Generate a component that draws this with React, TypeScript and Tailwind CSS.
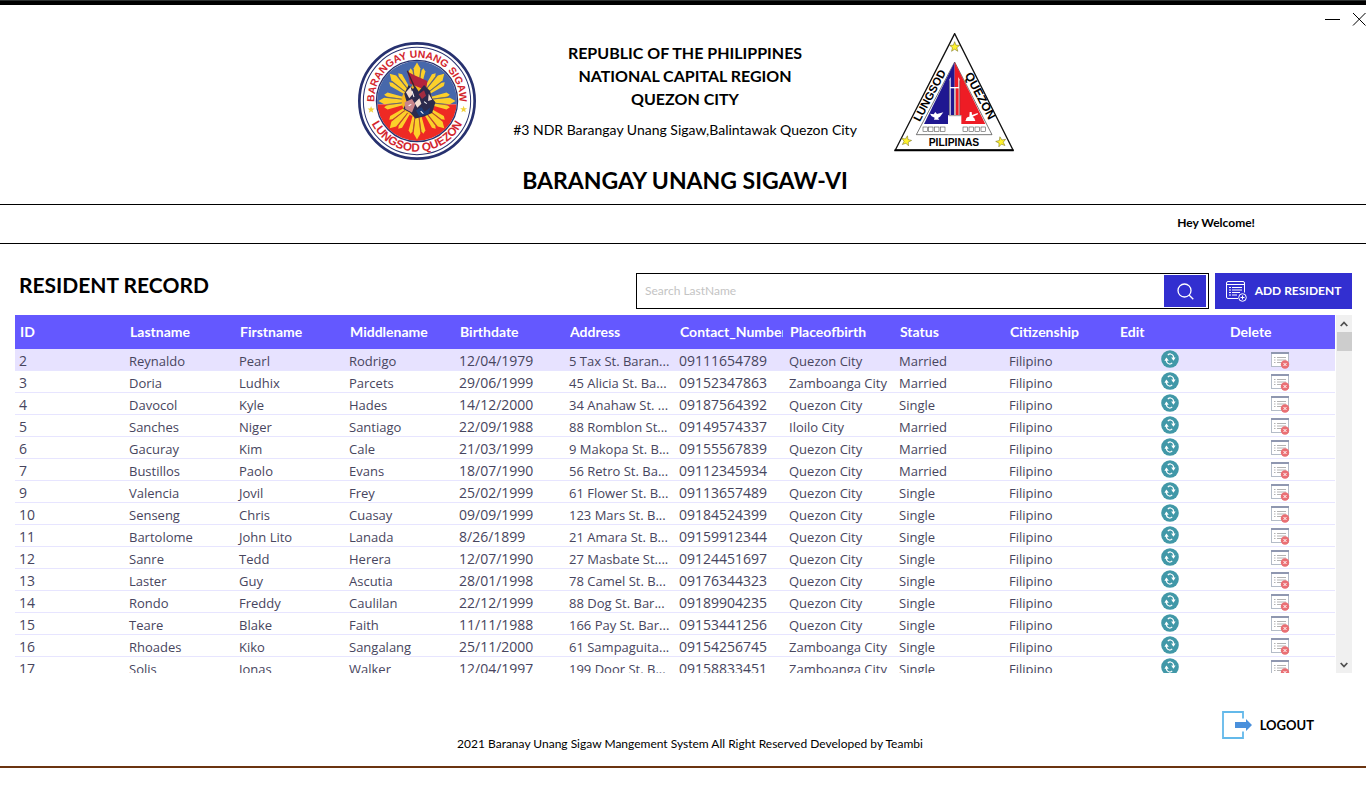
import React from "react";

type Resident = [string, string, string, string, string, string, string, string, string];

const headings = [
  "ID",
  "Lastname",
  "Firstname",
  "Middlename",
  "Birthdate",
  "Address",
  "Contact_Number",
  "Placeofbirth",
  "Status",
  "Citizenship",
  "Edit",
  "Delete",
];

const numericColumns = [0, 4, 6];

const residents: Resident[] = [
  ["2", "Reynaldo", "Pearl", "Rodrigo", "12/04/1979", "5 Tax St. Baran...", "09111654789", "Quezon City", "Married"],
  ["3", "Doria", "Ludhix", "Parcets", "29/06/1999", "45 Alicia St. Ba...", "09152347863", "Zamboanga City", "Married"],
  ["4", "Davocol", "Kyle", "Hades", "14/12/2000", "34 Anahaw St. ...", "09187564392", "Quezon City", "Single"],
  ["5", "Sanches", "Niger", "Santiago", "22/09/1988", "88 Romblon St...", "09149574337", "Iloilo City", "Married"],
  ["6", "Gacuray", "Kim", "Cale", "21/03/1999", "9 Makopa St. B...", "09155567839", "Quezon City", "Married"],
  ["7", "Bustillos", "Paolo", "Evans", "18/07/1990", "56 Retro St. Ba...", "09112345934", "Quezon City", "Married"],
  ["9", "Valencia", "Jovil", "Frey", "25/02/1999", "61 Flower St. B...", "09113657489", "Quezon City", "Single"],
  ["10", "Senseng", "Chris", "Cuasay", "09/09/1999", "123 Mars St. B...", "09184524399", "Quezon City", "Single"],
  ["11", "Bartolome", "John Lito", "Lanada", "8/26/1899", "21 Amara St. B...", "09159912344", "Quezon City", "Single"],
  ["12", "Sanre", "Tedd", "Herera", "12/07/1990", "27 Masbate St....", "09124451697", "Quezon City", "Single"],
  ["13", "Laster", "Guy", "Ascutia", "28/01/1998", "78 Camel St. B...", "09176344323", "Quezon City", "Single"],
  ["14", "Rondo", "Freddy", "Caulilan", "22/12/1999", "88 Dog St. Bar...", "09189904235", "Quezon City", "Single"],
  ["15", "Teare", "Blake", "Faith", "11/11/1988", "166 Pay St. Bar...", "09153441256", "Quezon City", "Single"],
  ["16", "Rhoades", "Kiko", "Sangalang", "25/11/2000", "61 Sampaguita...", "09154256745", "Zamboanga City", "Single"],
  ["17", "Solis", "Jonas", "Walker", "12/04/1997", "199 Door St. B...", "09158833451", "Zamboanga City", "Single"],
];

function Star({ x, y, r, fill, stroke, turn = 0 }: { x: number; y: number; r: number; fill: string; stroke?: string; turn?: number }) {
  const points = Array.from({ length: 10 }, (_, i) => {
    const a = ((-90 + turn + i * 36) * Math.PI) / 180;
    const d = i % 2 ? r * 0.42 : r;
    return `${(x + d * Math.cos(a)).toFixed(1)},${(y + d * Math.sin(a)).toFixed(1)}`;
  }).join(" ");
  return <polygon points={points} fill={fill} stroke={stroke} strokeWidth="1.5" />;
}

function BarangaySeal() {
  return (
    <svg viewBox="25 36 352 352" className="mt-[9px] h-[118px] w-[118px] shrink-0" role="img" aria-label="Barangay Unang Sigaw seal">
      <defs>
        <path id="sealTop" d="M76 232 A127 127 0 1 1 326 232" />
        <path id="sealBottom" d="M50 212 A151 151 0 0 0 352 212" />
        <clipPath id="sealDisc">
          <circle cx="201" cy="212" r="119" />
        </clipPath>
      </defs>
      <circle cx="201" cy="212" r="172" fill="#fff" stroke="#27316f" strokeWidth="8" />
      <circle cx="201" cy="212" r="160" fill="#fff" stroke="#27316f" strokeWidth="3" />
      <g clipPath="url(#sealDisc)">
        <rect x="80" y="90" width="242" height="132" fill="#4768ab" />
        <rect x="80" y="222" width="242" height="112" fill="#ee2a24" />
        {[0, 45, 90, 135, 180, 225, 270, 315].map((a) => (
          <g key={a} transform={`rotate(${a} 201 212)`} fill="#fcd02a">
            <polygon points="201,212 191,114 201,97 211,114" />
            <polygon points="200,212 176,124 182,114 188,122" />
            <polygon points="202,212 226,124 220,114 214,122" />
            <path d="M189 120 L199 190 M213 120 L203 190" stroke="#8a6a3a" strokeWidth="2" />
          </g>
        ))}
        <circle cx="201" cy="212" r="46" fill="#f7b81f" />
      </g>
      <circle cx="201" cy="212" r="121" fill="none" stroke="#27316f" strokeWidth="4" />
      <path d="M173 124 L190 134 L232 152 L228 180 L206 171 L180 160 Z" fill="#b5243c" />
      <path d="M172 122 L202 190" stroke="#3b2330" strokeWidth="4" />
      <path d="M163 190 L176 164 L189 176 L196 168 L206 184 L222 164 L240 182 L246 204 L256 216 L246 248 L222 258 L196 264 L180 246 L160 236 L170 214 Z" fill="#2c2b4d" />
      <path d="M168 186 L182 170 L188 192 L178 204 Z M194 218 L208 204 L214 220 L202 232 Z M236 190 L246 208 L234 212 Z" fill="#f3ddd0" />
      <path d="M164 216 L186 206 L196 222 L186 246 L166 236 Z" fill="#c8858a" />
      <path d="M206 192 L222 180 L228 196 L216 206 Z" fill="#a32c40" />
      <path d="M198 240 L214 230 L224 244 L240 232 L236 250 L208 258 Z" fill="#1b3c78" />
      <path d="M176 226 L184 222 M222 214 L230 220 M212 242 L220 250 M186 182 L192 200" stroke="#fff" strokeWidth="3" />
      <g fill="#d3262e" fontFamily="Liberation Sans, sans-serif" fontWeight="700" textAnchor="middle">
        <text fontSize="31">
          <textPath href="#sealTop" startOffset="50%">BARANGAY UNANG SIGAW</textPath>
        </text>
        <text fontSize="35">
          <textPath href="#sealBottom" startOffset="50%">LUNGSOD QUEZON</textPath>
        </text>
      </g>
      <Star x={64} y={238} r={11} fill="#f2d23c" />
      <Star x={340} y={237} r={11} fill="#f2d23c" />
    </svg>
  );
}

function CitySeal() {
  return (
    <svg viewBox="28 26 360 360" className="h-[120px] w-[120px] shrink-0" role="img" aria-label="Lungsod Quezon Pilipinas seal">
      <polygon points="210,28 32,377 385,377" fill="#fff" stroke="#111" strokeWidth="4" />
      <path d="M29 378 H387" stroke="#000" strokeWidth="5" />
      <polygon points="210,113 95,331 322,331" fill="#fff" stroke="#333" strokeWidth="2" />
      <polygon points="210,113 118,299 210,299" fill="#1f1791" />
      <polygon points="210,113 302,299 210,299" fill="#ee1c25" />
      <path d="M190 330 V272 H194 V166 L198 158 V188 H221 V158 L225 166 V272 H230 V330 Z" fill="#fff" />
      <path d="M198 192 H208 V272 H198 Z" fill="#1f1791" />
      <path d="M213 192 H222 V272 H213 Z" fill="#ee1c25" />
      <path d="M194 168 V272 M225 168 V272 M210.5 192 V272 M191 274 H230" stroke="#333" strokeWidth="1.5" fill="none" />
      <path d="M136 268 L147 270 L152 263 L157 269 L176 264 L166 277 L160 281 L164 286 H148 L150 280 L141 276 Z" fill="#fff" />
      <path d="M244 286 Q244 278 254 277 L255 263 H261 L262 272 L279 266 L280 270 L264 277 Q270 280 272 290 H242 Z" fill="#fff" />
      <g fill="#fff" stroke="#333" strokeWidth="1.5">
        {[115, 132, 150, 168, 235, 253, 271, 289].map((x) => (
          <rect key={x} x={x} y="308" width="13" height="13" />
        ))}
      </g>
      <g fill="#000" fontFamily="Liberation Sans, sans-serif" fontWeight="700" textAnchor="middle">
        <text fontSize="34" transform="translate(145 219) rotate(-62)">LUNGSOD</text>
        <text fontSize="36" transform="translate(276 220) rotate(62)">QUEZON</text>
        <text fontSize="31" x="208" y="366">PILIPINAS</text>
      </g>
      <Star x={210} y={68} r={16} fill="#fff22d" stroke="#6b6415" />
      <Star x={65} y={350} r={16} fill="#fff22d" stroke="#6b6415" turn={12} />
      <Star x={349} y={353} r={16} fill="#fff22d" stroke="#6b6415" turn={-12} />
    </svg>
  );
}

function EditIcon() {
  return (
    <svg viewBox="0 0 18 18" className="h-[18px] w-[18px]" aria-hidden="true">
      <circle cx="9" cy="9" r="8.8" fill="#4198a8" />
      <path d="M8.500 14 C6 13.500 5 11.500 5.400 8.600 M9.500 4 C12 4.500 13 6.500 12.600 9.400 M6.800 5.200 Q8 3.800 9.800 4 M11.200 12.800 Q10 14.200 8.200 14" fill="none" stroke="#fff" strokeWidth="1.2" />
      <path d="M3.400 10.800 L5.400 7.600 L7.800 10.800 Z M14.600 7.600 L12.400 10.800 L10.200 7.600 Z" fill="#fff" />
    </svg>
  );
}

function DeleteIcon() {
  return (
    <svg viewBox="0 0 19 17" className="h-[17px] w-[19px]" aria-hidden="true">
      <rect x="0.5" y="0.5" width="17" height="14" fill="#fff" stroke="#b4bcc8" />
      <path d="M0 1 H18" stroke="#8f97b0" strokeWidth="2" />
      <path d="M3 5.5 H4.5 M3 8 H4.5 M3 10.5 H4.5 M6 5.5 H15 M6 8 H15 M6 10.5 H11" stroke="#b3b3b3" />
      <circle cx="14" cy="12.5" r="4.2" fill="#ea6f74" />
      <path d="M12.5 11 L15.5 14 M15.5 11 L12.5 14" stroke="#fff" />
    </svg>
  );
}

function AddIcon() {
  return (
    <svg viewBox="0 0 21 21" className="h-[21px] w-[21px]" fill="none" stroke="#fff" aria-hidden="true">
      <path d="M12 17.5 H2 Q0.500 17.5 0.500 16 V2 Q0.500 0.500 2 0.500 H17 Q18.500 0.500 18.500 2 V11.500 M0.500 3.500 H18.500" />
      <path d="M3 6.500 H5 M6 6.500 H16 M3 9 H5 M6 9 H16 M3 11.500 H5 M6 11.500 H14 M3 14 H5 M6 14 H11" />
      <circle cx="16.500" cy="16.500" r="3.800" />
      <path d="M16.500 14.500 V18.500 M14.500 16.500 H18.500" />
    </svg>
  );
}

export default function App() {
  return (
    <div className="min-h-screen bg-white font-['Lato',sans-serif] text-black">
      <div className="h-[5px] border-t border-[#2c302f] bg-black" />

      <header className="overflow-hidden border-b border-black pb-2">
        <div className="flex h-7 justify-end gap-3">
          <button type="button" aria-label="Minimize" className="flex items-center">
            <svg viewBox="0 0 16 16" className="h-4 w-4" aria-hidden="true">
              <path d="M1 8.500 H16" stroke="#000" />
            </svg>
          </button>
          <button type="button" aria-label="Close" className="flex w-[14px] items-center overflow-hidden">
            <svg viewBox="0 0 14 14" className="h-[14px] w-[14px] shrink-0" aria-hidden="true">
              <path d="M1 1 L13.500 13.500 M13.500 1 L1 13.500" stroke="#000" />
            </svg>
          </button>
        </div>

        <div className="flex items-start justify-center pl-[6px]">
          <BarangaySeal />
          <div className="w-[418px] pt-2 text-center">
            <p className="text-base leading-[23px] font-bold">
              REPUBLIC OF THE PHILIPPINES
              <br />
              NATIONAL CAPITAL REGION
              <br />
              QUEZON CITY
            </p>
            <p className="mt-[10px] text-sm leading-5">#3 NDR Barangay Unang Sigaw,Balintawak Quezon City</p>
            <h1 className="mt-6 text-[23px] leading-8 font-bold">BARANGAY UNANG SIGAW-VI</h1>
          </div>
          <CitySeal />
        </div>
      </header>

      <div className="flex h-[39px] items-center justify-end border-b border-black pr-[111px] pb-[2px]">
        <p className="text-xs font-bold">Hey Welcome!</p>
      </div>

      <main className="pt-[29px] pr-[14px] pl-[15px]">
        <div className="flex h-9 items-center gap-[6px]">
          <h2 className="flex-1 pb-3 pl-1 text-[21px] leading-6 font-bold">RESIDENT RECORD</h2>
          <form className="flex h-9 w-3/7 items-center border border-black pr-[2px]" onSubmit={(e) => e.preventDefault()}>
            <input
              type="text"
              aria-label="Search LastName"
              placeholder="Search LastName"
              className="h-full min-w-0 flex-1 px-2 pb-[2px] text-xs outline-none placeholder:text-[#c4c4c4]"
            />
            <button type="submit" aria-label="Search" className="flex h-8 w-[42px] items-center justify-center bg-[#322fd0]">
              <svg viewBox="0 0 17 17" className="h-[17px] w-[17px]" fill="none" stroke="#fff" strokeWidth="1.3" aria-hidden="true">
                <circle cx="7.500" cy="7.500" r="6.500" />
                <path d="M12 12 L16.300 16.300" />
              </svg>
            </button>
          </form>
          <button type="button" className="flex h-9 w-[137px] items-center justify-center gap-2 bg-[#322fd0] text-xs font-bold whitespace-nowrap text-white">
            <AddIcon />
            ADD RESIDENT
          </button>
        </div>

        <div className="mt-[6px] flex h-[358px] gap-[1px]">
          <div className="min-w-0 flex-1 overflow-hidden">
            <table className="w-full table-fixed border-separate border-spacing-0 text-left">
              <thead>
                <tr className="h-[34px] bg-[#6458ff] text-sm text-white">
                  {headings.map((h) => (
                    <th key={h} scope="col" className="p-0 pr-[2px] pl-[5px] font-bold whitespace-nowrap">
                      <div className="overflow-hidden">{h}</div>
                    </th>
                  ))}
                </tr>
              </thead>
              <tbody className="font-['Open_Sans',sans-serif] text-[#47455e]">
                {residents.map((r) => (
                  <tr key={r[0]} className="h-[22px] first:bg-[#e7e2ff]">
                    {[...r, "Filipino"].map((value, i) => (
                      <td
                        key={i}
                        className={`overflow-hidden border-b border-[#e7e5ff] p-0 pt-[3px] pl-1 whitespace-nowrap ${
                          numericColumns.includes(i) ? "text-sm leading-[18px]" : "text-[13px] leading-[18px]"
                        }`}
                      >
                        {value}
                      </td>
                    ))}
                    <td className="border-b border-[#e7e5ff] p-0 pt-px align-top">
                      <button type="button" aria-label={`Edit ${r[1]}`} className="mx-auto block">
                        <EditIcon />
                      </button>
                    </td>
                    <td className="border-b border-[#e7e5ff] p-0 pt-[3px] align-top">
                      <button type="button" aria-label={`Delete ${r[1]}`} className="mx-auto block">
                        <DeleteIcon />
                      </button>
                    </td>
                  </tr>
                ))}
              </tbody>
            </table>
          </div>
          <div className="flex w-4 shrink-0 flex-col items-center bg-[#f0f0f0]">
            <button type="button" aria-label="Scroll up" className="flex h-[17px] w-full items-center justify-center">
              <svg viewBox="0 0 8 6" className="h-[6px] w-2" aria-hidden="true">
                <path d="M0.700 5 L4 1.500 L7.300 5" fill="none" stroke="#505050" strokeWidth="1.800" />
              </svg>
            </button>
            <div className="h-[19px] w-[15px] bg-[#cdcdcd]" />
            <button type="button" aria-label="Scroll down" className="mt-auto flex h-[17px] w-full items-center justify-center">
              <svg viewBox="0 0 8 6" className="h-[6px] w-2" aria-hidden="true">
                <path d="M0.700 1 L4 4.500 L7.300 1" fill="none" stroke="#505050" strokeWidth="1.800" />
              </svg>
            </button>
          </div>
        </div>
      </main>

      <footer className="border-b-2 border-[#6b3410] pt-[38px] pb-[13px]">
        <div className="flex justify-end pr-[52px]">
          <button type="button" className="flex items-center gap-2 text-[13px] leading-7 font-bold">
            <svg viewBox="0 0 30 28" className="h-7 w-[30px]" aria-hidden="true">
              <path d="M21 7.500 V1 H1 V27 H21 V20.500" fill="none" stroke="#63b9ea" strokeWidth="1.800" />
              <path d="M13 11 H24 V8 L30 14 L24 20 V17 H13 Z" fill="#4a90dc" />
            </svg>
            LOGOUT
          </button>
        </div>
        <p className="-mt-1 pl-[14px] text-center text-xs leading-[18px]">
          2021 Baranay Unang Sigaw Mangement System All Right Reserved Developed by Teambi
        </p>
      </footer>
    </div>
  );
}
